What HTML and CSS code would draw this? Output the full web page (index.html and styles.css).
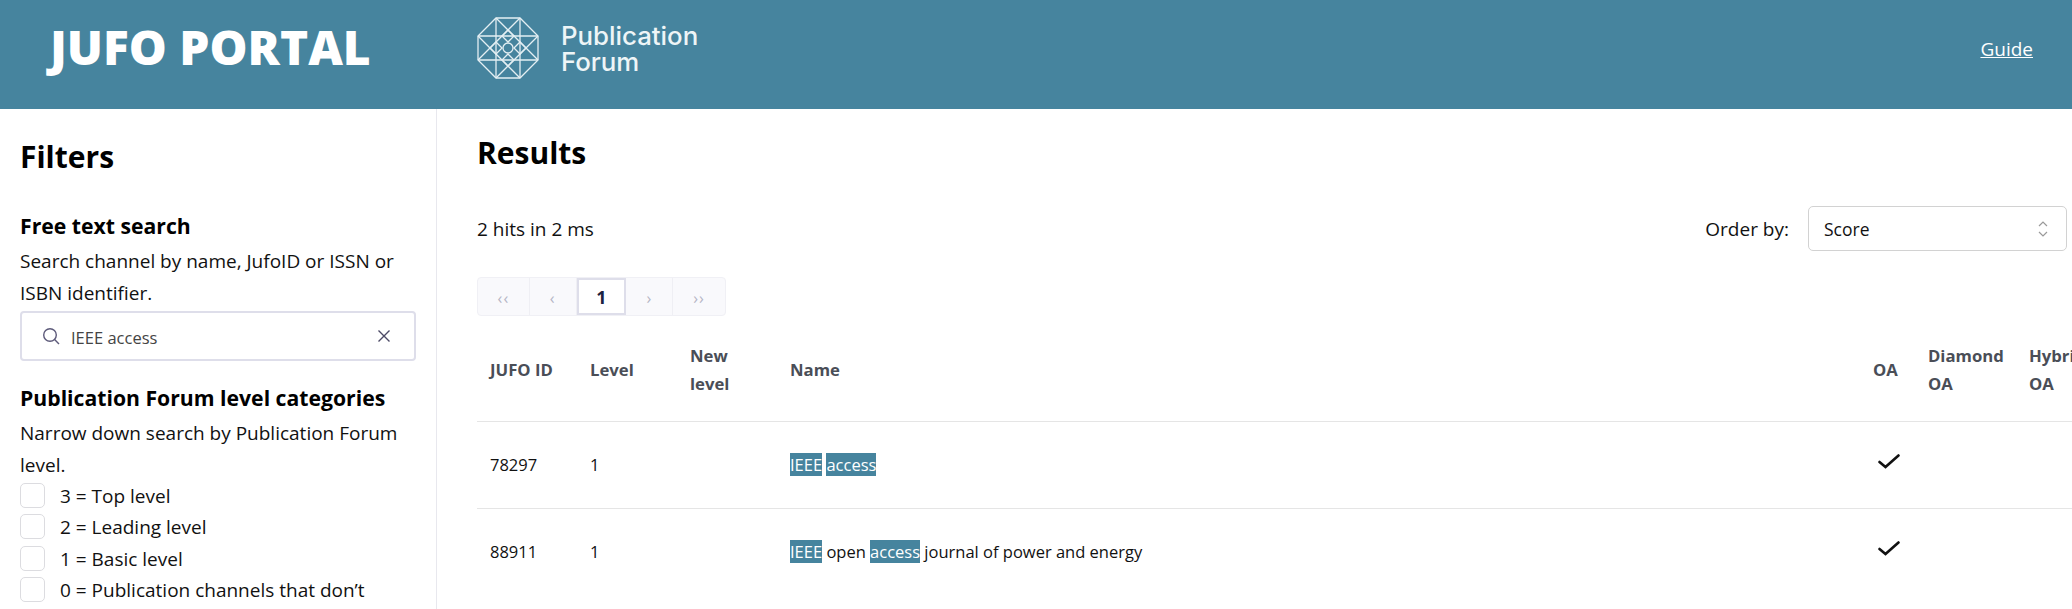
FILE: index.html
```
<!DOCTYPE html>
<html lang="en">
<head>
<meta charset="utf-8">
<title>JUFO Portal</title>
<link rel="stylesheet" href="styles.css">
</head>
<body>
<header class="topbar">
  <div class="brand">JUFO PORTAL</div>
  <div class="logo">
    <svg class="logo-mark" viewBox="0 0 64 64" fill="none" stroke="#e4eff3" stroke-width="1.3">
      <polygon points="20,2 44,2 62,20 62,44 44,62 20,62 2,44 2,20"/>
      <path d="M20 2V62M44 2V62M2 20H62M2 44H62"/>
      <path d="M20 2L62 44M44 2L2 44M2 20L44 62M62 20L20 62"/>
      <path d="M32 14L38 20L32 26L26 20ZM32 38L38 44L32 50L26 44ZM14 32L20 26L26 32L20 38ZM38 32L44 26L50 32L44 38Z"/>
      <circle cx="32" cy="32" r="5"/>
    </svg>
    <div class="logo-text">Publication<br>Forum</div>
  </div>
  <a class="guide" href="#">Guide</a>
</header>
<div class="layout">
  <aside class="sidebar">
    <h2 class="filters-title">Filters</h2>
    <h3 class="filter-title">Free text search</h3>
    <p class="filter-text">Search channel by name, JufoID or ISSN or ISBN identifier.</p>
    <div class="search">
      <svg class="search-icon" viewBox="0 0 18 18" fill="none" stroke="#5d5a7a" stroke-width="1.4"><circle cx="8" cy="8" r="6.3"/><path d="M12.6 12.6L17 17"/></svg>
      <span class="search-value">IEEE access</span>
      <svg class="search-clear" viewBox="0 0 14 14" fill="none" stroke="#4c4a66" stroke-width="1.4"><path d="M1.5 1.5L12.5 12.5M12.5 1.5L1.5 12.5"/></svg>
    </div>
    <h3 class="filter-title filter-title-levels">Publication Forum level categories</h3>
    <p class="filter-text">Narrow down search by Publication Forum level.</p>
    <ul class="checks">
      <li class="check"><span class="box"></span><span class="check-label">3 = Top level</span></li>
      <li class="check"><span class="box"></span><span class="check-label">2 = Leading level</span></li>
      <li class="check"><span class="box"></span><span class="check-label">1 = Basic level</span></li>
      <li class="check"><span class="box"></span><span class="check-label">0 = Publication channels that don’t meet the level criteria</span></li>
    </ul>
  </aside>
  <main class="results">
    <h1 class="results-title">Results</h1>
    <div class="toolbar">
      <span>2 hits in 2 ms</span>
      <div class="order">
        <span>Order by:</span>
        <div class="select">
          <span>Score</span>
          <svg class="select-icon" viewBox="0 0 12 18" fill="none" stroke="#9a9a9a" stroke-width="1.2"><path d="M2 6L6 2L10 6M2 12L6 16L10 12"/></svg>
        </div>
      </div>
    </div>
    <nav class="pager">
      <span class="page page-edge">‹‹</span><span class="page">‹</span><span class="page page-active">1</span><span class="page">›</span><span class="page page-edge">››</span>
    </nav>
    <table class="table">
      <thead>
        <tr>
          <th class="col-id">JUFO ID</th><th class="col-level">Level</th><th class="col-new">New level</th><th class="col-name">Name</th><th class="col-oa">OA</th><th class="col-diamond">Diamond OA</th><th class="col-hybrid">Hybrid OA</th>
        </tr>
      </thead>
      <tbody>
        <tr>
          <td>78297</td><td>1</td><td></td>
          <td><mark>IEEE</mark> <mark>access</mark></td>
          <td><svg class="tick" viewBox="0 0 22 15" fill="none" stroke="#111" stroke-width="2.6" stroke-linecap="round"><path d="M1.5 8L7.5 13L20.5 1.5"/></svg></td><td></td><td></td>
        </tr>
        <tr>
          <td>88911</td><td>1</td><td></td>
          <td><mark>IEEE</mark> open <mark>access</mark> journal of power and energy</td>
          <td><svg class="tick" viewBox="0 0 22 15" fill="none" stroke="#111" stroke-width="2.6" stroke-linecap="round"><path d="M1.5 8L7.5 13L20.5 1.5"/></svg></td><td></td><td></td>
        </tr>
      </tbody>
    </table>
  </main>
</div>
</body>
</html>
```
FILE: styles.css
```
* { box-sizing: border-box; }
html, body { margin: 0; height: 100%; overflow: hidden; }
body { font-family: "Open Sans", "Noto Sans", sans-serif; font-size: 19px; color: #111; background: #fff; }
.topbar { height: 109px; background: #46849e; color: #fff; display: flex; align-items: center; padding: 0 39px 12px 50px; }
.brand { width: 426px; margin-bottom: 3px; font-size: 47.8px; font-weight: 800; line-height: 1; }
.logo { display: flex; align-items: center; gap: 21px; margin-bottom: 2px; }
.logo-mark { width: 64px; height: 64px; }
.logo-text { margin-top: 2px; font-family: "Inter", sans-serif; font-size: 25.8px; font-weight: 500; line-height: 26px; color: #eef5f7; }
.guide { margin-left: auto; color: #fff; font-size: 19px; }
.layout { display: flex; }
.sidebar { width: 437px; flex: none; padding: 0 20px; border-right: 1px solid #e8e8ee; height: 500px; overflow: hidden; }
.filters-title { margin: 26px 0 0; font-size: 30px; line-height: 44px; font-weight: 700; color: #000; }
.filter-title { margin: 27px 0 0; font-size: 21.2px; line-height: 40px; font-weight: 700; color: #000; }
.filter-title-levels { margin-top: 17px; }
.filter-text { margin: 0; line-height: 31.5px; }
.search { height: 50px; margin-top: 2px; display: flex; align-items: center; border: 2px solid #dedeea; border-radius: 4px; padding: 0 23px 0 20px; }
.search-icon { width: 18px; height: 18px; flex: none; }
.search-value { margin: 2px 0 0 11px; color: #444; font-size: 16.5px; }
.search-clear { width: 14px; height: 14px; margin-left: auto; }
.checks { list-style: none; margin: 0; padding: 0; }
.check { display: flex; align-items: flex-start; gap: 15px; line-height: 31.3px; }
.check-label { padding-right: 24px; }
.box { width: 25px; height: 25px; flex: none; margin-top: 2px; border: 1px solid #dcdce0; border-radius: 5px; }
.results { flex: 1; min-width: 0; padding: 0 5px 0 40px; }
.results-title { margin: 22px 0 0; font-size: 30px; line-height: 44px; font-weight: 700; color: #000; }
.toolbar { margin-top: 31px; display: flex; justify-content: space-between; align-items: center; }
.order { display: flex; align-items: center; gap: 19px; }
.select { width: 259px; height: 45px; display: flex; align-items: center; justify-content: space-between; padding: 0 17px 0 15px; border: 1px solid #d2d2d2; border-radius: 5px; font-size: 17.5px; }
.select-icon { width: 12px; height: 18px; }
.pager { margin-top: 26px; display: flex; width: 249px; height: 39px; border: 1px solid #f0f0f5; border-radius: 4px; background: #f9f9fc; }
.page { width: 47px; padding-top: 3px; display: flex; align-items: center; justify-content: center; color: #b5b5c5; font-size: 16px; letter-spacing: 1px; border-right: 1px solid #efeff4; }
.page-edge { width: 52px; }
.page:last-child { border-right: 0; }
.page-active { width: 50px; padding-top: 0; background: #fff; color: #1c2340; font-weight: 700; font-size: 18px; letter-spacing: 0; border: 2px solid #dedeea; }
.table { display: block; width: 1600px; border-collapse: collapse; table-layout: fixed; }
.table tr { border-bottom: 1px solid #e5e5e5; }
.table tbody tr:last-child { border-bottom: 0; }
.table th { height: 105px; padding: 3px 12px 0; text-align: left; vertical-align: middle; font-size: 16.7px; line-height: 28px; font-weight: 700; color: #4a4e57; }
.table td { height: 87px; padding: 0 12px; font-size: 16.5px; vertical-align: middle; }
.table th:first-child, .table td:first-child { padding-left: 13px; }
.col-id { width: 101px; min-width: 101px; }
.col-level { width: 100px; min-width: 100px; }
.col-new { width: 100px; min-width: 100px; }
.col-name { width: 1083px; min-width: 1083px; }
.col-oa { width: 55px; min-width: 55px; }
.col-diamond { width: 101px; min-width: 101px; }
.col-hybrid { width: 100px; min-width: 100px; }
mark { background: #46849e; color: #fff; }
.tick { width: 22px; height: 15px; display: block; margin: 0 0 6px 5px; }
```
